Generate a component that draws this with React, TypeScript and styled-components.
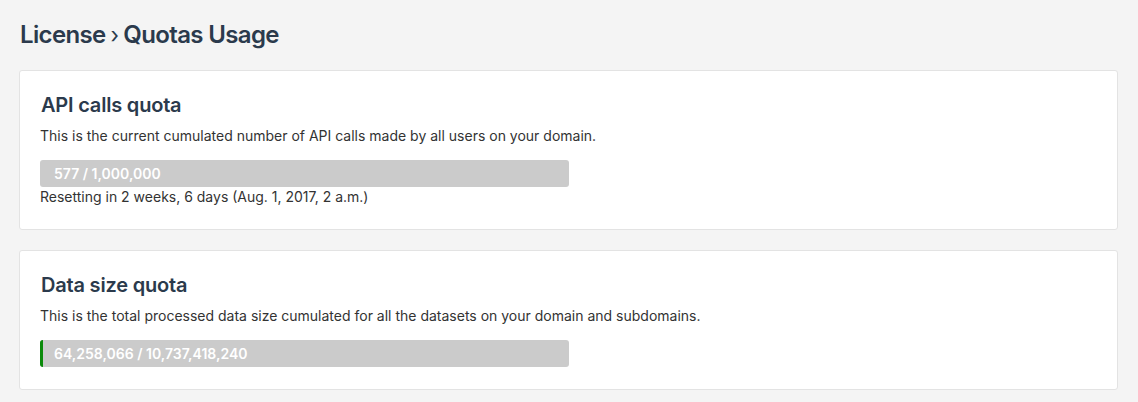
import React from "react";
import styled, { createGlobalStyle } from "styled-components";

const GlobalStyle = createGlobalStyle`
  html, body {
    margin: 0;
    padding: 0;
    background: #f4f4f4;
  }
  body {
    font-family: Inter, "Liberation Sans", Arial, sans-serif;
    color: #333333;
  }
  * { box-sizing: border-box; }
`;

const Page = styled.div`
  display: flex;
  flex-direction: column;
  gap: 20px;
  padding: 20px 20px 12px 19px;
`;

const PageTitle = styled.h1`
  margin: 0 0 0 1px;
  font-size: 24px;
  line-height: 30px;
  font-weight: 600;
  color: #2b3a4c;
  letter-spacing: -0.65px;
`;

const Sep = styled.span`
  font-weight: 400;
  font-size: 22px;
  margin: 0 5px 0 5px;
`;

const Card = styled.section`
  background: #ffffff;
  border: 1px solid #e3e3e3;
  border-radius: 3px;
  padding: 20px 20px 22px 20px;
  display: flex;
  flex-direction: column;
`;

const CardTitle = styled.h2`
  margin: 0 0 0 1px;
  font-size: 20px;
  line-height: 29px;
  font-weight: 600;
  color: #2b3a4c;
  letter-spacing: -0.2px;
`;

const Description = styled.p`
  margin: 6px 0 0 0;
  font-size: 14px;
  line-height: 20px;
  color: #333333;
`;

const Bar = styled.div`
  position: relative;
  margin-top: 14px;
  width: 529px;
  height: 27px;
  background: #cbcbcb;
  border-radius: 3px;
  overflow: hidden;
`;

const Fill = styled.div`
  position: absolute;
  left: 0;
  top: 0;
  bottom: 0;
  background: #0a8a0a;
`;

const BarLabel = styled.span`
  position: relative;
  display: block;
  padding-left: 14px;
  line-height: 27px;
  font-size: 14px;
  font-weight: 600;
  color: #ffffff;
`;

const Note = styled.p`
  margin: 0;
  font-size: 14px;
  line-height: 20px;
  color: #333333;
`;

type Quota = {
  title: string;
  description: string;
  used: number;
  total: number;
  note?: string;
};

const quotas: Quota[] = [
  {
    title: "API calls quota",
    description:
      "This is the current cumulated number of API calls made by all users on your domain.",
    used: 577,
    total: 1000000,
    note: "Resetting in 2 weeks, 6 days (Aug. 1, 2017, 2 a.m.)",
  },
  {
    title: "Data size quota",
    description:
      "This is the total processed data size cumulated for all the datasets on your domain and subdomains.",
    used: 64258066,
    total: 10737418240,
  },
];

const fmt = (n: number) => n.toLocaleString("en-US");

export default function App() {
  return (
    <>
      <GlobalStyle />
      <Page>
        <PageTitle>
          License<Sep>›</Sep>Quotas Usage
        </PageTitle>
        {quotas.map((q) => {
          const px = Math.round((q.used / q.total) * 529);
          return (
            <Card key={q.title}>
              <CardTitle>{q.title}</CardTitle>
              <Description>{q.description}</Description>
              <Bar>
                {px >= 1 && <Fill style={{ width: `${Math.max(px, 2)}px` }} />}
                <BarLabel>
                  {fmt(q.used)} / {fmt(q.total)}
                </BarLabel>
              </Bar>
              {q.note && <Note>{q.note}</Note>}
            </Card>
          );
        })}
      </Page>
    </>
  );
}
